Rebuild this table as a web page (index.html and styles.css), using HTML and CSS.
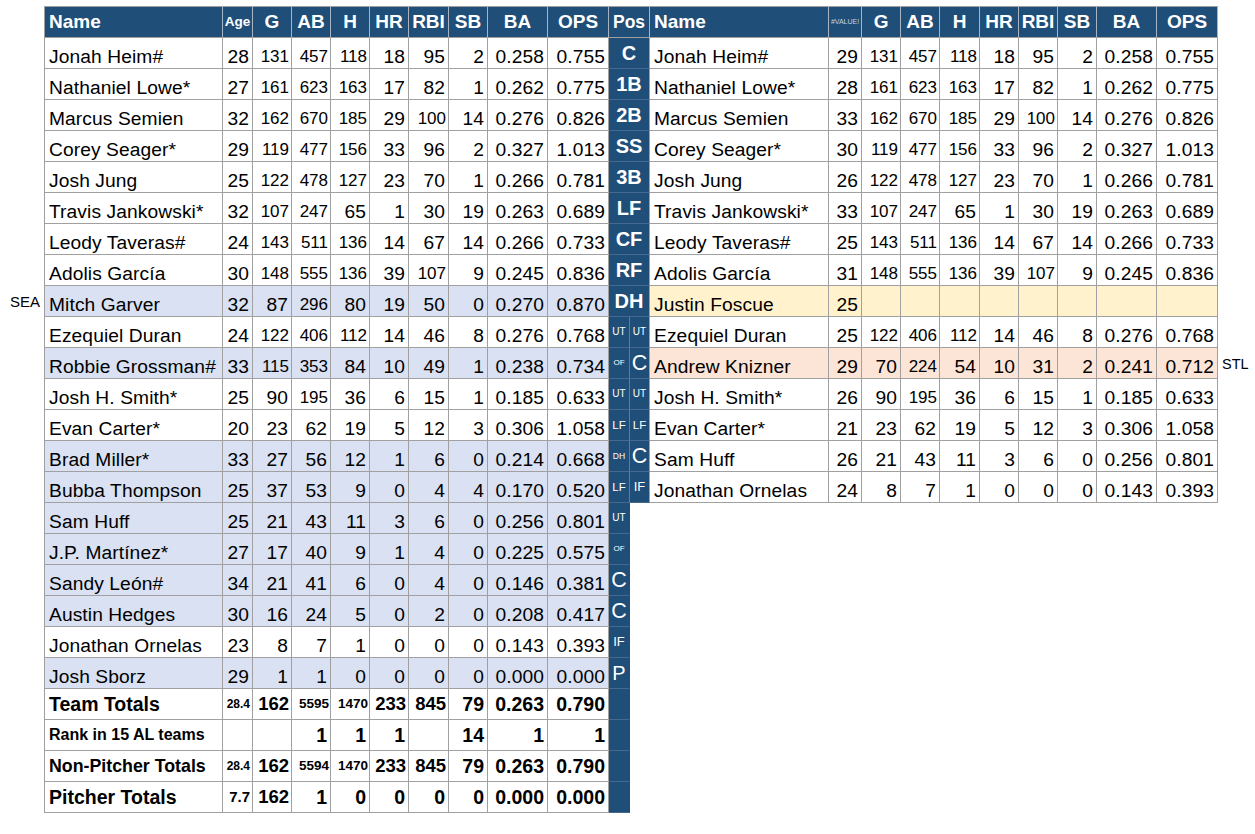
FILE: index.html
```html
<!DOCTYPE html>
<html lang="en">
<head>
<meta charset="utf-8">
<title>Rangers roster comparison</title>
<link rel="stylesheet" href="styles.css">
</head>
<body>
<table class="sheet">
  <colgroup>
    <col class="c-side"><col class="c-name"><col class="c-age"><col class="c-n"><col class="c-n"><col class="c-n"><col class="c-n"><col class="c-n40"><col class="c-n"><col class="c-ba"><col class="c-ops">
    <col class="c-pa"><col class="c-pb">
    <col class="c-name"><col class="c-val"><col class="c-n"><col class="c-n"><col class="c-n40"><col class="c-n"><col class="c-n"><col class="c-n"><col class="c-ba"><col class="c-ops"><col class="c-sider">
  </colgroup>
  <tr class="hd">
    <th class="sd"></th><th class="hn">Name</th><th class="age">Age</th><th>G</th><th>AB</th><th>H</th><th>HR</th><th>RBI</th><th>SB</th><th>BA</th><th>OPS</th>
    <th class="ph" colspan="2">Pos</th>
    <th class="hn">Name</th><th class="val">#VALUE!</th><th>G</th><th>AB</th><th>H</th><th>HR</th><th>RBI</th><th>SB</th><th>BA</th><th>OPS</th><th class="sd"></th>
  </tr>
  <tr>
    <td class="sd"></td><td class="nm">Jonah Heim#</td><td>28</td><td class="sm">131</td><td class="sm">457</td><td class="sm">118</td><td>18</td><td>95</td><td>2</td><td>0.258</td><td>0.755</td>
    <td class="pos" colspan="2">C</td>
    <td class="nm">Jonah Heim#</td><td>29</td><td class="sm">131</td><td class="sm">457</td><td class="sm">118</td><td>18</td><td>95</td><td>2</td><td>0.258</td><td>0.755</td><td class="sd"></td>
  </tr>
  <tr>
    <td class="sd"></td><td class="nm">Nathaniel Lowe*</td><td>27</td><td class="sm">161</td><td class="sm">623</td><td class="sm">163</td><td>17</td><td>82</td><td>1</td><td>0.262</td><td>0.775</td>
    <td class="pos" colspan="2">1B</td>
    <td class="nm">Nathaniel Lowe*</td><td>28</td><td class="sm">161</td><td class="sm">623</td><td class="sm">163</td><td>17</td><td>82</td><td>1</td><td>0.262</td><td>0.775</td><td class="sd"></td>
  </tr>
  <tr>
    <td class="sd"></td><td class="nm">Marcus Semien</td><td>32</td><td class="sm">162</td><td class="sm">670</td><td class="sm">185</td><td>29</td><td class="sm">100</td><td>14</td><td>0.276</td><td>0.826</td>
    <td class="pos" colspan="2">2B</td>
    <td class="nm">Marcus Semien</td><td>33</td><td class="sm">162</td><td class="sm">670</td><td class="sm">185</td><td>29</td><td class="sm">100</td><td>14</td><td>0.276</td><td>0.826</td><td class="sd"></td>
  </tr>
  <tr>
    <td class="sd"></td><td class="nm">Corey Seager*</td><td>29</td><td class="sm">119</td><td class="sm">477</td><td class="sm">156</td><td>33</td><td>96</td><td>2</td><td>0.327</td><td>1.013</td>
    <td class="pos" colspan="2">SS</td>
    <td class="nm">Corey Seager*</td><td>30</td><td class="sm">119</td><td class="sm">477</td><td class="sm">156</td><td>33</td><td>96</td><td>2</td><td>0.327</td><td>1.013</td><td class="sd"></td>
  </tr>
  <tr>
    <td class="sd"></td><td class="nm">Josh Jung</td><td>25</td><td class="sm">122</td><td class="sm">478</td><td class="sm">127</td><td>23</td><td>70</td><td>1</td><td>0.266</td><td>0.781</td>
    <td class="pos" colspan="2">3B</td>
    <td class="nm">Josh Jung</td><td>26</td><td class="sm">122</td><td class="sm">478</td><td class="sm">127</td><td>23</td><td>70</td><td>1</td><td>0.266</td><td>0.781</td><td class="sd"></td>
  </tr>
  <tr>
    <td class="sd"></td><td class="nm">Travis Jankowski*</td><td>32</td><td class="sm">107</td><td class="sm">247</td><td>65</td><td>1</td><td>30</td><td>19</td><td>0.263</td><td>0.689</td>
    <td class="pos" colspan="2">LF</td>
    <td class="nm">Travis Jankowski*</td><td>33</td><td class="sm">107</td><td class="sm">247</td><td>65</td><td>1</td><td>30</td><td>19</td><td>0.263</td><td>0.689</td><td class="sd"></td>
  </tr>
  <tr>
    <td class="sd"></td><td class="nm">Leody Taveras#</td><td>24</td><td class="sm">143</td><td class="sm">511</td><td class="sm">136</td><td>14</td><td>67</td><td>14</td><td>0.266</td><td>0.733</td>
    <td class="pos" colspan="2">CF</td>
    <td class="nm">Leody Taveras#</td><td>25</td><td class="sm">143</td><td class="sm">511</td><td class="sm">136</td><td>14</td><td>67</td><td>14</td><td>0.266</td><td>0.733</td><td class="sd"></td>
  </tr>
  <tr>
    <td class="sd"></td><td class="nm">Adolis García</td><td>30</td><td class="sm">148</td><td class="sm">555</td><td class="sm">136</td><td>39</td><td class="sm">107</td><td>9</td><td>0.245</td><td>0.836</td>
    <td class="pos" colspan="2">RF</td>
    <td class="nm">Adolis García</td><td>31</td><td class="sm">148</td><td class="sm">555</td><td class="sm">136</td><td>39</td><td class="sm">107</td><td>9</td><td>0.245</td><td>0.836</td><td class="sd"></td>
  </tr>
  <tr class="b y">
    <td class="sd sea">SEA</td><td class="nm">Mitch Garver</td><td>32</td><td>87</td><td class="sm">296</td><td>80</td><td>19</td><td>50</td><td>0</td><td>0.270</td><td>0.870</td>
    <td class="pos" colspan="2">DH</td>
    <td class="nm">Justin Foscue</td><td>25</td><td></td><td></td><td></td><td></td><td></td><td></td><td></td><td></td><td class="sd"></td>
  </tr>
  <tr>
    <td class="sd"></td><td class="nm">Ezequiel Duran</td><td>24</td><td class="sm">122</td><td class="sm">406</td><td class="sm">112</td><td>14</td><td>46</td><td>8</td><td>0.276</td><td>0.768</td>
    <td class="pa t9">UT</td><td class="pb t9">UT</td>
    <td class="nm">Ezequiel Duran</td><td>25</td><td class="sm">122</td><td class="sm">406</td><td class="sm">112</td><td>14</td><td>46</td><td>8</td><td>0.276</td><td>0.768</td><td class="sd"></td>
  </tr>
  <tr class="b o">
    <td class="sd"></td><td class="nm">Robbie Grossman#</td><td>33</td><td class="sm">115</td><td class="sm">353</td><td>84</td><td>10</td><td>49</td><td>1</td><td>0.238</td><td>0.734</td>
    <td class="pa t7">OF</td><td class="pb t21">C</td>
    <td class="nm">Andrew Knizner</td><td>29</td><td>70</td><td class="sm">224</td><td>54</td><td>10</td><td>31</td><td>2</td><td>0.241</td><td>0.712</td><td class="sd stl">STL</td>
  </tr>
  <tr>
    <td class="sd"></td><td class="nm">Josh H. Smith*</td><td>25</td><td>90</td><td class="sm">195</td><td>36</td><td>6</td><td>15</td><td>1</td><td>0.185</td><td>0.633</td>
    <td class="pa t9">UT</td><td class="pb t9">UT</td>
    <td class="nm">Josh H. Smith*</td><td>26</td><td>90</td><td class="sm">195</td><td>36</td><td>6</td><td>15</td><td>1</td><td>0.185</td><td>0.633</td><td class="sd"></td>
  </tr>
  <tr>
    <td class="sd"></td><td class="nm">Evan Carter*</td><td>20</td><td>23</td><td>62</td><td>19</td><td>5</td><td>12</td><td>3</td><td>0.306</td><td>1.058</td>
    <td class="pa t11">LF</td><td class="pb t11">LF</td>
    <td class="nm">Evan Carter*</td><td>21</td><td>23</td><td>62</td><td>19</td><td>5</td><td>12</td><td>3</td><td>0.306</td><td>1.058</td><td class="sd"></td>
  </tr>
  <tr class="b">
    <td class="sd"></td><td class="nm">Brad Miller*</td><td>33</td><td>27</td><td>56</td><td>12</td><td>1</td><td>6</td><td>0</td><td>0.214</td><td>0.668</td>
    <td class="pa t8">DH</td><td class="pb t21">C</td>
    <td class="nm">Sam Huff</td><td>26</td><td>21</td><td>43</td><td>11</td><td>3</td><td>6</td><td>0</td><td>0.256</td><td>0.801</td><td class="sd"></td>
  </tr>
  <tr class="b">
    <td class="sd"></td><td class="nm">Bubba Thompson</td><td>25</td><td>37</td><td>53</td><td>9</td><td>0</td><td>4</td><td>4</td><td>0.170</td><td>0.520</td>
    <td class="pa t11">LF</td><td class="pb t12">IF</td>
    <td class="nm">Jonathan Ornelas</td><td>24</td><td>8</td><td>7</td><td>1</td><td>0</td><td>0</td><td>0</td><td>0.143</td><td>0.393</td><td class="sd"></td>
  </tr>
  <tr class="b">
    <td class="sd"></td><td class="nm">Sam Huff</td><td>25</td><td>21</td><td>43</td><td>11</td><td>3</td><td>6</td><td>0</td><td>0.256</td><td>0.801</td>
    <td class="pa solo t9">UT</td><td class="bl" colspan="13"></td>
  </tr>
  <tr class="b">
    <td class="sd"></td><td class="nm">J.P. Martínez*</td><td>27</td><td>17</td><td>40</td><td>9</td><td>1</td><td>4</td><td>0</td><td>0.225</td><td>0.575</td>
    <td class="pa solo t7">OF</td><td class="bl" colspan="13"></td>
  </tr>
  <tr class="b">
    <td class="sd"></td><td class="nm">Sandy León#</td><td>34</td><td>21</td><td>41</td><td>6</td><td>0</td><td>4</td><td>0</td><td>0.146</td><td>0.381</td>
    <td class="pa solo t21">C</td><td class="bl" colspan="13"></td>
  </tr>
  <tr class="b">
    <td class="sd"></td><td class="nm">Austin Hedges</td><td>30</td><td>16</td><td>24</td><td>5</td><td>0</td><td>2</td><td>0</td><td>0.208</td><td>0.417</td>
    <td class="pa solo t21">C</td><td class="bl" colspan="13"></td>
  </tr>
  <tr>
    <td class="sd"></td><td class="nm">Jonathan Ornelas</td><td>23</td><td>8</td><td>7</td><td>1</td><td>0</td><td>0</td><td>0</td><td>0.143</td><td>0.393</td>
    <td class="pa solo t12">IF</td><td class="bl" colspan="13"></td>
  </tr>
  <tr class="b">
    <td class="sd"></td><td class="nm">Josh Sborz</td><td>29</td><td>1</td><td>1</td><td>0</td><td>0</td><td>0</td><td>0</td><td>0.000</td><td>0.000</td>
    <td class="pa solo t20">P</td><td class="bl" colspan="13"></td>
  </tr>
  <tr class="tot">
    <td class="sd"></td><td class="nm lbl-team">Team Totals</td><td class="xs">28.4</td><td class="md">162</td><td class="xm">5595</td><td class="xm">1470</td><td class="md">233</td><td class="md">845</td><td>79</td><td>0.263</td><td>0.790</td>
    <td class="pa solo"></td><td class="bl" colspan="13"></td>
  </tr>
  <tr class="tot">
    <td class="sd"></td><td class="nm lbl-rank">Rank in 15 AL teams</td><td></td><td></td><td>1</td><td>1</td><td>1</td><td></td><td>14</td><td>1</td><td>1</td>
    <td class="pa solo"></td><td class="bl" colspan="13"></td>
  </tr>
  <tr class="tot">
    <td class="sd"></td><td class="nm lbl-np">Non-Pitcher Totals</td><td class="xs">28.4</td><td class="md">162</td><td class="xm">5594</td><td class="xm">1470</td><td class="md">233</td><td class="md">845</td><td>79</td><td>0.263</td><td>0.790</td>
    <td class="pa solo"></td><td class="bl" colspan="13"></td>
  </tr>
  <tr class="tot">
    <td class="sd"></td><td class="nm lbl-team">Pitcher Totals</td><td class="age7">7.7</td><td class="md">162</td><td>1</td><td>0</td><td>0</td><td>0</td><td>0</td><td>0.000</td><td>0.000</td>
    <td class="pa solo"></td><td class="bl" colspan="13"></td>
  </tr>
</table>
</body>
</html>
```

FILE: styles.css
```css
* { box-sizing: border-box; }
html, body { margin: 0; padding: 0; background: #ffffff; }
body { font-family: "Liberation Sans", Arial, sans-serif; color: #000; }

.sheet {
  border-collapse: separate;
  border-spacing: 0;
  table-layout: fixed;
  width: 1255px;
  margin-top: 6px;
}

.c-side { width: 44px; }
.c-name { width: 179px; }
.c-age { width: 30px; }
.c-n { width: 39px; }
.c-n40 { width: 40px; }
.c-ba { width: 60px; }
.c-ops { width: 61px; }
.c-pa { width: 21px; }
.c-pb { width: 20px; }
.c-val { width: 33px; }
.c-sider { width: 37px; }

.sheet td, .sheet th {
  height: 31px;
  padding: 0 3px 0 2px;
  border-right: 1px solid #a0a0a0;
  border-bottom: 1px solid #a0a0a0;
  font-size: 19.2px;
  letter-spacing: 0.1px;
  line-height: 22px;
  text-align: right;
  vertical-align: bottom;
  white-space: nowrap;
  overflow: hidden;
  font-weight: normal;
}

/* header */
.sheet th {
  height: 32px;
  background: #1f4e79;
  color: #ffffff;
  font-weight: bold;
  font-size: 19px;
  letter-spacing: 0;
  text-align: center;
  vertical-align: middle;
  border-top: 1px solid #a0a0a0;
  border-right-color: #a9b4c2;
  padding: 0;
}
.sheet th.hn { text-align: left; padding-left: 4px; }
.sheet th:nth-child(2) { border-left: 1px solid #a0a0a0; }
.sheet th.age { font-size: 13.5px; }
.sheet th.val { font-size: 7px; font-weight: normal; color: #c9d3de; }
.sheet th.ph { font-size: 17.5px; }

/* side labels */
.sheet .sd {
  border: none;
  background: transparent;
  font-size: 15px;
  letter-spacing: 0;
  vertical-align: middle;
}
.sheet td.sea { text-align: right; padding-right: 4px; }
.sheet td.stl { text-align: left; padding-left: 4px; font-size: 14.5px; }

/* names */
.sheet td.nm { text-align: left; padding-left: 4px; }
.sheet td:nth-child(2) { border-left: 1px solid #a0a0a0; }

/* shrunk numbers */
.sheet td.sm { font-size: 17px; letter-spacing: 0; padding-right: 2px; }

/* position column */
.sheet td.pos, .sheet td.pa, .sheet td.pb {
  background: #1f4e79;
  color: #ffffff;
  text-align: center;
  vertical-align: middle;
  padding: 0;
  letter-spacing: 0;
  border-bottom-color: #44698f;
}
.sheet td.pos { font-weight: bold; font-size: 20px; }
.sheet td.pa { border-right-color: #5a7ca0; }
.sheet td.pa.solo { border-right-color: #1f4e79; }
.sheet td.t7 { font-size: 8px; }
.sheet td.t8 { font-size: 8.5px; }
.sheet td.t9 { font-size: 10px; }
.sheet td.t11 { font-size: 11.5px; }
.sheet td.t12 { font-size: 13px; }
.sheet td.t20 { font-size: 20px; }
.sheet td.t21 { font-size: 21.5px; }

.sheet td.bl { border: none; background: transparent; }

/* highlighted rows */
.sheet tr.b > td:nth-child(n+2):nth-child(-n+11) { background: #d9e1f2; }
.sheet tr.y > td:nth-child(n+13):not(:last-child) { background: #fff2cc; }
.sheet tr.o > td:nth-child(n+14):not(:last-child) { background: #fce4d6; }

/* totals */
.sheet tr.tot td { font-weight: bold; vertical-align: middle; font-size: 19.5px; letter-spacing: 0; }
.sheet tr.tot td.lbl-team { font-size: 19.5px; }
.sheet tr.tot td.lbl-rank { font-size: 16px; }
.sheet tr.tot td.lbl-np { font-size: 17.8px; }
.sheet tr.tot td.xs { font-size: 12px; padding-right: 2px; }
.sheet tr.tot td.xm { font-size: 13.5px; padding-right: 1px; }
.sheet tr.tot td.md { font-size: 18.5px; padding-right: 2px; }
.sheet tr.tot td.age7 { font-size: 15px; padding-right: 2px; }
.sheet tr.tot td.pa { font-size: 0; }
```
